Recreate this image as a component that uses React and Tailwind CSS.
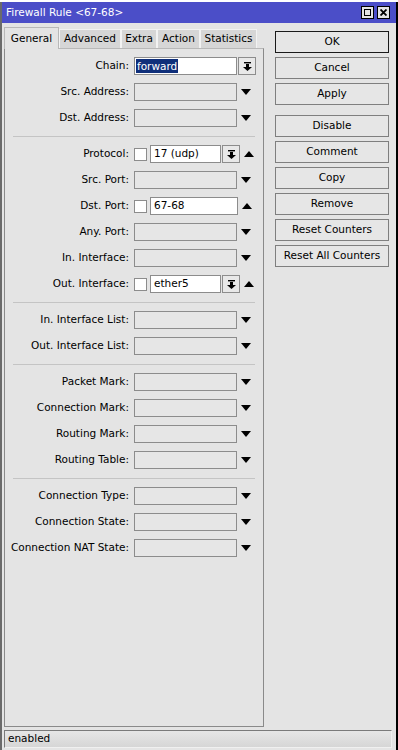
import React from 'react'

const font = { fontFamily: '"DejaVu Sans", Tahoma, sans-serif' }

function ArrowDown() {
  return (
    <svg width="10" height="6" viewBox="0 0 10 6" className="block">
      <polygon points="0,0 10,0 5,6" fill="#000" />
    </svg>
  )
}

function ArrowUp() {
  return (
    <svg width="10" height="6" viewBox="0 0 10 6" className="block">
      <polygon points="0,6 10,6 5,0" fill="#000" />
    </svg>
  )
}

function DropButton() {
  return (
    <div className="w-[18px] h-[18px] border border-[#8c8c8c] bg-[#e8e8e8] flex items-center justify-center">
      <svg width="9" height="9" viewBox="0 0 9 9" className="block">
        <rect x="1" y="0" width="7" height="1.4" fill="#000" />
        <rect x="3" y="2" width="3" height="3" fill="#000" />
        <polygon points="0,5 9,5 4.5,9" fill="#000" />
      </svg>
    </div>
  )
}

function Check() {
  return <div className="w-[13px] h-[13px] border border-[#8c8c8c] bg-white mr-[2px] shrink-0" />
}

function Row({ label, children }) {
  return (
    <div className="h-[26px] flex items-center">
      <div className="w-[129px] text-right pr-[5px] text-[10.5px] text-black whitespace-nowrap">{label}:</div>
      {children}
    </div>
  )
}

function EmptyRow({ label }) {
  return (
    <Row label={label}>
      <div className="w-[103px] h-[18px] border border-[#8c8c8c] bg-[#e6e6e6]" />
      <div className="w-[18px] flex justify-center"><ArrowDown /></div>
    </Row>
  )
}

function Sep() {
  return (
    <div className="h-[10px] flex items-center pl-[8px] pr-[8px]">
      <div className="w-full h-px bg-[#c4c4c4]" />
    </div>
  )
}

function Btn({ children, primary }) {
  return (
    <div className={`h-[22px] flex items-center justify-center text-[10.5px] bg-[#e6e6e6] border ${primary ? 'border-[#1a1a1a]' : 'border-[#7f7f7f]'}`}>
      {children}
    </div>
  )
}

const tabs = [
  ['General', 'w-[55px]'],
  ['Advanced', 'w-[62px]'],
  ['Extra', 'w-[36px]'],
  ['Action', 'w-[43px]'],
  ['Statistics', 'w-[57px]'],
]

export default function App() {
  return (
    <div className="w-[398px] h-[750px] flex flex-col bg-white overflow-hidden" style={font}>
      <div className="h-[2px] bg-white" />
      <div className="flex-1 flex flex-col bg-[#e4e4e4] border-l-2 border-l-[#6b6b6b] border-r-2 border-r-black">
        <div className="h-[21px] bg-[#4b4ec8] flex items-center justify-between pl-[4px] pr-[6px]">
          <span className="text-white text-[10.5px]">Firewall Rule &lt;67-68&gt;</span>
          <div className="flex gap-[3px]">
            <div className="w-[13px] h-[13px] bg-[#e4e4e4] border border-black flex items-center justify-center">
              <div className="w-[7px] h-[7px] border border-black" />
            </div>
            <div className="w-[13px] h-[13px] bg-[#e4e4e4] border border-black flex items-center justify-center">
              <svg width="7" height="7" viewBox="0 0 7 7" className="block">
                <path d="M0.5 0.5 L6.5 6.5 M6.5 0.5 L0.5 6.5" stroke="#000" strokeWidth="1.8" />
              </svg>
            </div>
          </div>
        </div>

        <div className="flex-1 flex pl-[2px] pt-[3px]">
          <div className="w-[260px] flex flex-col">
            <div className="flex items-end h-[22px]">
              {tabs.map(([t, w], i) => (
                <div
                  key={t}
                  className={
                    i === 0
                      ? `${w} h-[22px] flex items-center justify-center text-[10.5px] bg-[#e4e4e4] border border-b-0 border-[#b8b8b8] relative top-px`
                      : `${w} h-[19px] flex items-center justify-center text-[10.5px] bg-[#d6d6d6] border border-[#f2f2f2] border-b-0`
                  }
                >
                  {t}
                </div>
              ))}
            </div>
            <div className="flex-1 border border-[#8a8a8a] border-t-[#b8b8b8] pt-[4px]">
              <Row label="Chain">
                <div className="w-[103px] h-[18px] border border-[#8c8c8c] bg-white flex items-center pl-px">
                  <span className="bg-[#0f2f7a] text-white text-[10.5px] leading-[14px] px-px">forward</span>
                </div>
                <div className="ml-px"><DropButton /></div>
              </Row>
              <EmptyRow label="Src. Address" />
              <EmptyRow label="Dst. Address" />
              <Sep />
              <Row label="Protocol">
                <Check />
                <div className="ml-px w-[71px] h-[18px] border border-[#8c8c8c] bg-white flex items-center pl-[3px] text-[10.5px]">17 (udp)</div>
                <div className="ml-px"><DropButton /></div>
                <div className="w-[18px] flex justify-center"><ArrowUp /></div>
              </Row>
              <EmptyRow label="Src. Port" />
              <Row label="Dst. Port">
                <Check />
                <div className="ml-px w-[88px] h-[18px] border border-[#8c8c8c] bg-white flex items-center pl-[3px] text-[10.5px]">67-68</div>
                <div className="w-[18px] flex justify-center"><ArrowUp /></div>
              </Row>
              <EmptyRow label="Any. Port" />
              <EmptyRow label="In. Interface" />
              <Row label="Out. Interface">
                <Check />
                <div className="ml-px w-[71px] h-[18px] border border-[#8c8c8c] bg-white flex items-center pl-[3px] text-[10.5px]">ether5</div>
                <div className="ml-px"><DropButton /></div>
                <div className="w-[18px] flex justify-center"><ArrowUp /></div>
              </Row>
              <Sep />
              <EmptyRow label="In. Interface List" />
              <EmptyRow label="Out. Interface List" />
              <Sep />
              <EmptyRow label="Packet Mark" />
              <EmptyRow label="Connection Mark" />
              <EmptyRow label="Routing Mark" />
              <EmptyRow label="Routing Table" />
              <Sep />
              <EmptyRow label="Connection Type" />
              <EmptyRow label="Connection State" />
              <EmptyRow label="Connection NAT State" />
            </div>
          </div>

          <div className="w-[114px] ml-[11px] pt-[5px] flex flex-col">
            <div className="flex flex-col gap-[4px]">
              <Btn primary>OK</Btn>
              <Btn>Cancel</Btn>
              <Btn>Apply</Btn>
            </div>
            <div className="flex flex-col gap-[4px] mt-[10px]">
              <Btn>Disable</Btn>
              <Btn>Comment</Btn>
              <Btn>Copy</Btn>
              <Btn>Remove</Btn>
              <Btn>Reset Counters</Btn>
              <Btn>Reset All Counters</Btn>
            </div>
          </div>
        </div>

        <div className="h-[23px] pl-[2px] pr-[4px] pt-[3px] pb-[2px]">
          <div className="h-full border border-[#7a7a7a] border-r-[#f0f0f0] border-b-[#f0f0f0] bg-gradient-to-b from-[#e6e6e6] to-[#d6d6d6] flex items-center pl-[3px] text-[10.5px]">
            enabled
          </div>
        </div>
      </div>
    </div>
  )
}
